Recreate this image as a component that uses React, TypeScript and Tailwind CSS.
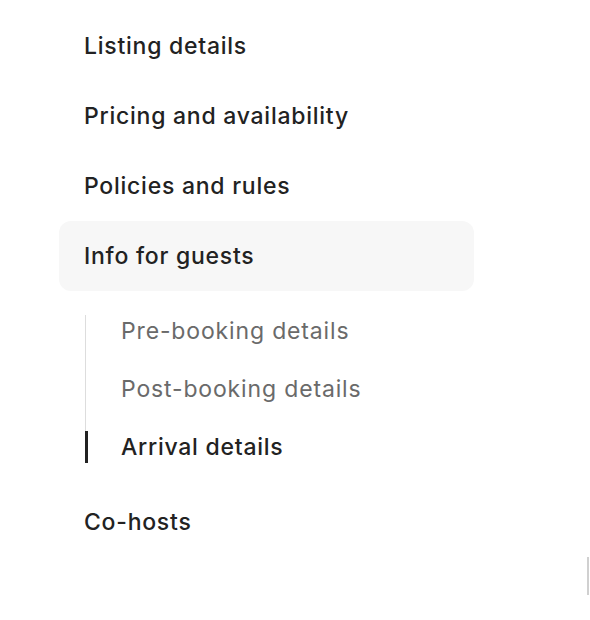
import React from "react";

export default function App() {
  const font = { fontFamily: "Inter, 'Noto Sans', sans-serif" };
  const head = "h-[70px] flex items-center pl-[25px] text-[23px] tracking-[0.75px] font-medium text-[#222222]";
  const sub = "h-[32px] flex items-center pl-[35px] text-[23px] tracking-[0.85px] text-[#6a6a6a]";
  return (
    <div className="relative w-[590px] h-[620px] bg-white" style={font}>
      <nav className="flex flex-col pt-[11px] pl-[59px] w-[474px]">
        <div className={head}>Listing details</div>
        <div className={head}>Pricing and availability</div>
        <div className={head}>Policies and rules</div>
        <div className={head + " h-[69px] bg-[#f7f7f7] rounded-[12px]"}>Info for guests</div>
        <div className="mt-[24px] ml-[26px] flex flex-col gap-[26px] border-l border-[#dddddd]">
          <div className={sub}>Pre-booking details</div>
          <div className={sub}>Post-booking details</div>
          <div className="relative h-[32px] flex items-center pl-[35px] text-[23px] tracking-[0.75px] font-medium text-[#222222]">
            <span className="absolute left-[-1px] top-0 h-[32px] w-[3px] bg-[#222222]" />
            Arrival details
          </div>
        </div>
        <div className={head + " mt-[24px]"}>Co-hosts</div>
      </nav>
      <div className="absolute left-[587px] top-[557px] w-[2px] h-[38px] bg-[#d0d0d0]" />
    </div>
  );
}
